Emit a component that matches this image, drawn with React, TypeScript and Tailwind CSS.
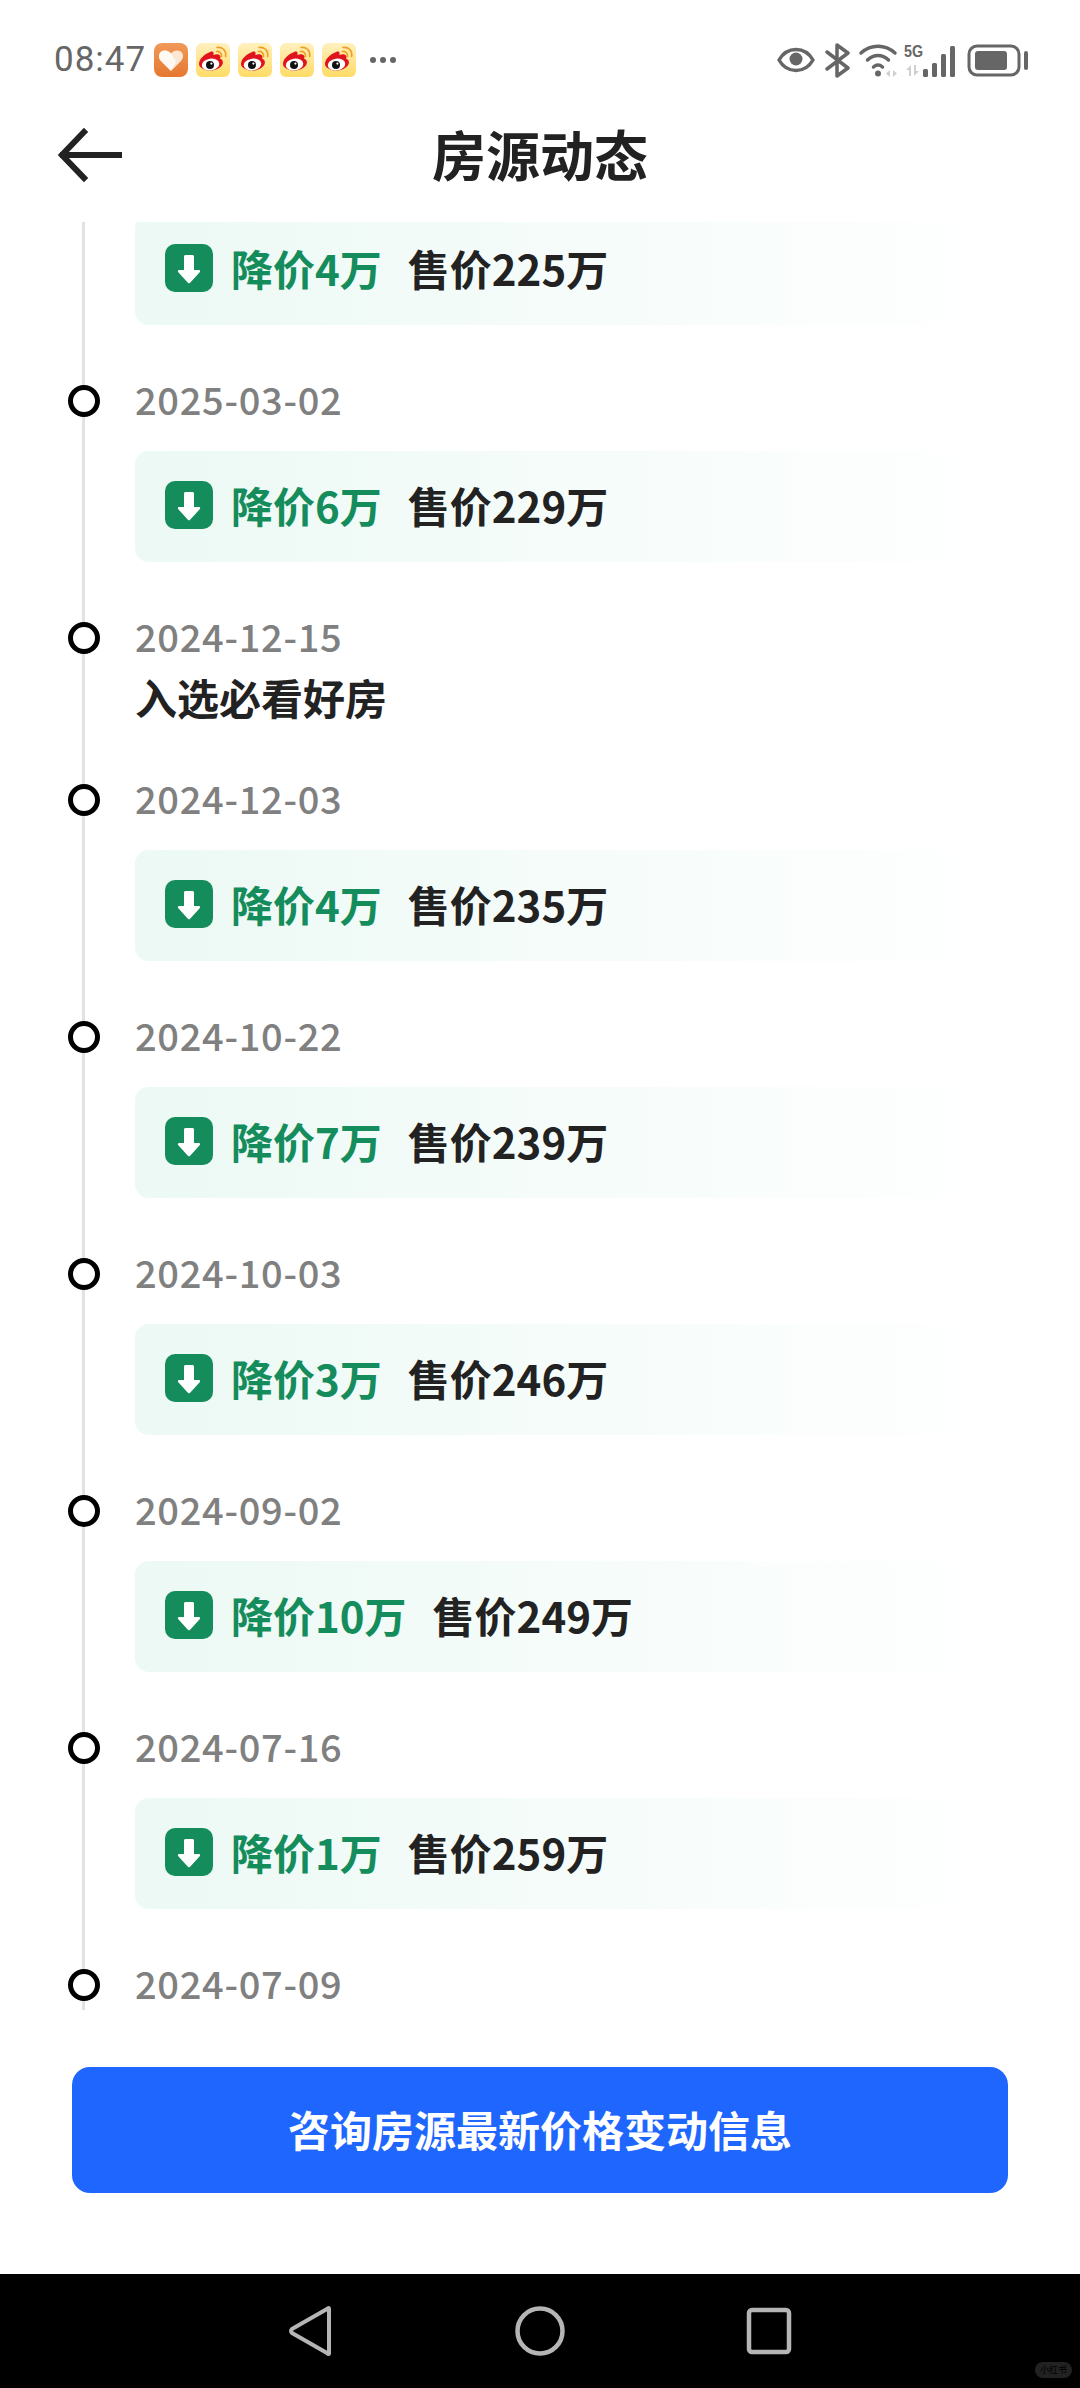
import React from 'react';

const CJK = 'font-["Noto_Sans_CJK_SC",sans-serif]';

type Item = { date: string; drop?: string; price?: string; note?: string };

const items: Item[] = [
  { date: '2025-03-02', drop: '6', price: '229' },
  { date: '2024-12-15', note: '入选必看好房' },
  { date: '2024-12-03', drop: '4', price: '235' },
  { date: '2024-10-22', drop: '7', price: '239' },
  { date: '2024-10-03', drop: '3', price: '246' },
  { date: '2024-09-02', drop: '10', price: '249' },
  { date: '2024-07-16', drop: '1', price: '259' },
  { date: '2024-07-09' },
];

function AppTile({ id }: { id: number }) {
  return (
    <svg width="34" height="34" viewBox="0 0 34 34">
      <defs>
        <linearGradient id={`wb${id}`} x1="0" y1="0" x2="0" y2="1">
          <stop offset="0" stopColor="#fff0bf" />
          <stop offset="1" stopColor="#ffdc66" />
        </linearGradient>
      </defs>
      <rect width="34" height="34" rx="6" fill={`url(#wb${id})`} />
      <path d="M3 21c0-5 5-9 9-11 2-1 4-2 5-1 1 .7.6 2 .3 3 3-1 6-1 7 1 .6 1 .1 2-.4 2.600 2 .8 3 2 3 4 0 4-6 8-12 8S3 25 3 21z" fill="#e0141c" />
      <ellipse cx="14.500" cy="21.500" rx="8.800" ry="5.800" fill="#fff" transform="rotate(-8 14.500 21.500)" />
      <circle cx="14" cy="22" r="4" fill="#111" />
      <circle cx="15.400" cy="20.600" r="1.100" fill="#fff" />
      <path d="M20.500 8.500c3-.6 5.500 1.800 5 5M21 4.500c5.500-.8 9.500 3.200 8.700 9" fill="none" stroke="#f0a020" strokeWidth="1.700" strokeLinecap="round" />
    </svg>
  );
}

function HeartTile() {
  return (
    <svg width="34" height="34" viewBox="0 0 34 34">
      <defs>
        <linearGradient id="ht" x1="0" y1="0" x2="0" y2="1">
          <stop offset="0" stopColor="#f0995a" />
          <stop offset="1" stopColor="#e5782f" />
        </linearGradient>
      </defs>
      <rect width="34" height="34" rx="8" fill="url(#ht)" />
      <path d="M17 28 7 18c-3-3.200-2.500-7.500.3-9.500 3-2 7-1.200 9.700 2 2.700-3.200 6.700-4 9.700-2 2.800 2 3.300 6.300.3 9.500z" fill="#fde6d2" />
      <path d="M7 18c-3-3.200-2.500-7.500.3-9.500 3-2 7-1.200 9.700 2l5 8.500-5 9z" fill="#fff" opacity=".75" />
    </svg>
  );
}

function StatusBar() {
  return (
    <div className="flex h-[120px] items-center justify-between pl-[54px] pr-[51px] text-[#666666]">
      <div className="flex items-center">
        <span className='w-[100px] font-["Roboto",sans-serif] text-[35px] leading-[40px] tracking-[1px]'>08:47</span>
        <div className="flex items-center gap-[8px]">
          <HeartTile />
          {[1, 2, 3, 4].map((i) => (
            <AppTile key={i} id={i} />
          ))}
        </div>
        <div className="ml-[14px] flex gap-[4px]">
          <span className="h-[6px] w-[6px] rounded-full bg-[#666666]" />
          <span className="h-[6px] w-[6px] rounded-full bg-[#666666]" />
          <span className="h-[6px] w-[6px] rounded-full bg-[#666666]" />
        </div>
      </div>
      <svg width="252" height="36" viewBox="0 0 252 36" fill="none">
        {/* eye */}
        <path d="M2 18c4-7 10-10.500 17-10.500S32 11 36 18c-4 7-10 10.500-17 10.500S6 25 2 18z" stroke="#666" strokeWidth="3.500" strokeLinejoin="round" />
        <circle cx="19" cy="17" r="6.500" fill="#666" />
        {/* bluetooth */}
        <path d="M50 10 71 26 60 34V3l11 8-21 16" stroke="#666" strokeWidth="3.500" strokeLinejoin="round" strokeLinecap="round" />
        {/* wifi */}
        <path d="M84 11c10-9 24-9 34 0" stroke="#666" strokeWidth="3.500" strokeLinecap="round" />
        <path d="M90.500 18c6.500-6 14.500-6 21 0" stroke="#666" strokeWidth="3.500" strokeLinecap="round" />
        <path d="M96.500 25c3-2.600 6-2.600 9 0" stroke="#666" strokeWidth="3.500" strokeLinecap="round" />
        <circle cx="101" cy="31.500" r="3" fill="#666" />
        <path d="M113 28l-4 3.500 4 3.500zM116 28l4 3.500-4 3.500z" fill="#cfcfcf" />
        {/* 5G */}
        <text x="127" y="15" fontFamily="Liberation Sans, sans-serif" fontWeight="700" fontSize="16" fill="#666" textLength="19" lengthAdjust="spacingAndGlyphs">5G</text>
        <path d="M134 23l-5 5h3v6h2zM137 23v11l5-5h-3v-6z" fill="#cfcfcf" />
        {/* signal */}
        <rect x="146" y="27" width="5" height="8" rx="1.500" fill="#666" />
        <rect x="155" y="21" width="5" height="14" rx="1.500" fill="#666" />
        <rect x="164" y="12" width="5" height="23" rx="1.500" fill="#666" />
        <rect x="173" y="4" width="5" height="31" rx="1.500" fill="#666" />
        {/* battery */}
        <rect x="192" y="4" width="50" height="29" rx="8" stroke="#666" strokeWidth="3" />
        <rect x="198" y="9" width="32" height="19" rx="3" fill="#666" />
        <rect x="247" y="9" width="4" height="19" rx="2" fill="#666" />
      </svg>
    </div>
  );
}

function Header() {
  return (
    <div className="relative flex h-[102px] items-center justify-center">
      <svg className="absolute left-[58px] top-[8px]" width="64" height="56" viewBox="0 0 64 56" fill="none">
        <path d="M61 27H5M26 4 4 27l22 23" stroke="#222" strokeWidth="6" strokeLinecap="square" />
      </svg>
      <h1 className={`${CJK} -mt-[34px] text-[54px] font-bold leading-[70px] text-[#222222]`}>房源动态</h1>
    </div>
  );
}

function DropCard({ drop, price, className }: { drop: string; price: string; className: string }) {
  return (
    <div className={`${className} flex h-[111px] w-[875px] items-center rounded-[14px] bg-linear-to-r from-[#ecf9f4] to-white pl-[30px]`}>
      <svg width="48" height="48" viewBox="0 0 48 48" className="-mt-[4px] shrink-0">
        <rect width="48" height="48" rx="10" fill="#148c5c" />
        <path d="M19 12.500c0-.8.700-1.500 1.500-1.500h7c.8 0 1.500.7 1.500 1.500V26h5c1 0 1.500 1.100.9 1.900l-10 11c-.5.500-1.300.5-1.800 0l-10-11c-.6-.8-.1-1.900.9-1.900h5z" fill="#fff" />
      </svg>
      <span className={`${CJK} -mt-[3px] ml-[18px] text-[42px] font-bold leading-[56px] text-[#148c5c]`}>降价{drop}万</span>
      <span className={`${CJK} -mt-[3px] ml-[26px] text-[42px] font-bold leading-[56px] text-[#222222]`}>售价{price}万</span>
    </div>
  );
}

function Row({ item }: { item: Item }) {
  return (
    <div className="flex">
      <div className="relative z-10 flex h-[50px] w-[67px] shrink-0 items-center">
        <span className="h-[32px] w-[32px] rounded-full border-[5px] border-black bg-white" />
      </div>
      <div className={item.note ? 'pb-[50px]' : 'pb-[51px]'}>
        <div className="h-[50px]">
          <div className={`${CJK} text-[38px] font-medium leading-[46px] tracking-[0.7px] text-[#808080]`}>{item.date}</div>
        </div>
        {item.note && (
          <div className={`${CJK} mt-[6px] text-[42px] font-bold leading-[56px] text-[#222222]`}>{item.note}</div>
        )}
        {item.drop && item.price && <DropCard className="mt-[25px]" drop={item.drop} price={item.price} />}
      </div>
    </div>
  );
}

export default function App() {
  return (
    <div className="flex h-[2388px] w-[1080px] flex-col overflow-hidden bg-white">
      <StatusBar />
      <Header />
      <div className="relative h-[1808px] shrink-0 overflow-hidden pl-[68px]">
        <div className="absolute left-[82px] top-0 h-[1788px] w-[3px] bg-[#e2e2e2]" />
        {/* first card is scrolled partly under the header */}
        <div className="-mt-[8px] pb-[51px] pl-[67px]">
          <DropCard className="" drop="4" price="225" />
        </div>
        {items.map((item) => (
          <Row key={item.date} item={item} />
        ))}
      </div>
      <div className="flex-1 px-[72px] pt-[37px]">
        <button className={`${CJK} h-[126px] w-[936px] rounded-[18px] bg-[#1f66ff] pb-[4px] text-[42px] font-bold text-white`}>
          咨询房源最新价格变动信息
        </button>
      </div>
      <div className="relative flex h-[114px] items-center justify-center bg-black">
        <svg width="504" height="52" viewBox="0 0 504 52" fill="none">
          <path d="M41 4v44q0 2-2 0L4 28q-2-2 0-4L39 4q2-2 2 0z" stroke="#b5b5b5" strokeWidth="4" strokeLinejoin="round" />
          <circle cx="252" cy="26" r="22.500" stroke="#b5b5b5" strokeWidth="4.500" />
          <rect x="461" y="5" width="40" height="42" rx="3" stroke="#b5b5b5" strokeWidth="4.500" />
        </svg>
        <div className={`${CJK} absolute bottom-[10px] right-[8px] flex h-[16px] w-[37px] items-center justify-center rounded-full bg-[#222222] text-[9px] text-black`}>
          小红书
        </div>
      </div>
    </div>
  );
}
